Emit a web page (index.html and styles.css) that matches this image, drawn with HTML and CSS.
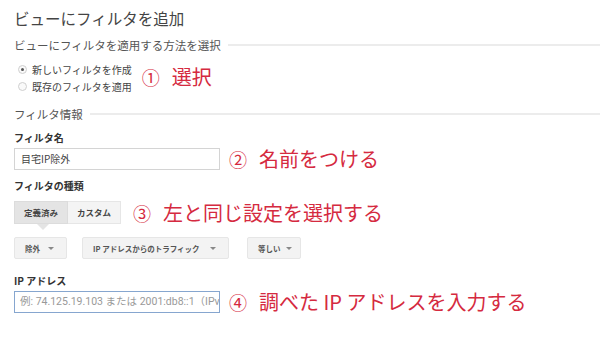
FILE: index.html
```html
<!DOCTYPE html>
<html lang="ja">
<head>
  <meta charset="UTF-8">
  <title>ビューにフィルタを追加</title>
  <link rel="stylesheet" href="styles.css">
</head>
<body>
  <h1 class="page-title">ビューにフィルタを追加</h1>

  <div class="section-head">
    <span>ビューにフィルタを適用する方法を選択</span>
  </div>

  <div class="row">
    <div class="radios">
      <label class="radio"><span class="dot checked"></span>新しいフィルタを作成</label>
      <label class="radio"><span class="dot"></span>既存のフィルタを適用</label>
    </div>
    <div class="note note-1"><span class="num">①</span>選択</div>
  </div>

  <div class="section-head info-head">
    <span>フィルタ情報</span>
  </div>

  <div class="field-label">フィルタ名</div>
  <div class="row">
    <div class="text-input">目宅IP除外</div>
    <div class="note"><span class="num">②</span>名前をつける</div>
  </div>

  <div class="field-label type-label">フィルタの種類</div>
  <div class="row tabs-row">
    <div class="tabs">
      <div class="tab active">定義済み</div>
      <div class="tab">カスタム</div>
    </div>
    <div class="note note-3"><span class="num">③</span>左と同じ設定を選択する</div>
  </div>

  <div class="selects">
    <div class="select sel-exclude">除外<span class="caret"></span></div>
    <div class="select sel-traffic">IP アドレスからのトラフィック<span class="caret"></span></div>
    <div class="select sel-equal">等しい<span class="caret"></span></div>
  </div>

  <div class="field-label ip-label">IP アドレス</div>
  <div class="row">
    <div class="text-input focus">例: 74.125.19.103 または 2001:db8::1（IPv6 の場合）</div>
    <div class="note"><span class="num">④</span>調べた IP アドレスを入力する</div>
  </div>
</body>
</html>
```

FILE: styles.css
```css
body {
  margin: 0;
  padding: 8px 0 0 14px;
  background: #fff;
  color: #333;
  font-family: "Noto Sans CJK JP", "Noto Sans", sans-serif;
  font-size: 10px;
}

.page-title {
  margin: 0;
  font-size: 15.5px;
  font-weight: 400;
  color: #444;
  line-height: 20px;
}

.section-head {
  display: flex;
  align-items: center;
  gap: 7px;
  margin-top: 9px;
  font-size: 11.5px;
  color: #555;
  line-height: 16px;
}

.section-head::after {
  content: "";
  flex: 1;
  border-top: 2px solid #ececec;
}

.info-head {
  margin-top: 12px;
}

.row {
  display: flex;
  align-items: center;
}

.radios {
  display: flex;
  flex-direction: column;
  gap: 2px;
  margin-top: 9px;
  padding-left: 4px;
}

.radio {
  display: flex;
  align-items: center;
  gap: 5px;
  font-size: 10px;
  color: #444;
  line-height: 15px;
}

.dot {
  width: 7px;
  height: 7px;
  border: 1px solid #cfcfcf;
  border-radius: 50%;
  background: #fafafa;
  position: relative;
}

.dot.checked::after {
  content: "";
  position: absolute;
  left: 2px;
  top: 2px;
  width: 3px;
  height: 3px;
  border-radius: 50%;
  background: #555;
}

.note {
  display: flex;
  align-items: center;
  margin-left: 9px;
  font-size: 20px;
  color: #d52a40;
  line-height: 22px;
  white-space: nowrap;
}

.num {
  font-size: 18px;
  margin-right: 12px;
}

.note-1 {
  margin-top: 6px;
  margin-left: 10px;
}

.field-label {
  margin-top: 9px;
  font-weight: 700;
  font-size: 10px;
  color: #333;
  line-height: 14px;
}

.text-input {
  box-sizing: border-box;
  width: 206px;
  height: 22px;
  margin-top: 3px;
  padding: 0 6px;
  border: 1px solid #d4d4d4;
  font-size: 10px;
  line-height: 20px;
  color: #444;
  white-space: nowrap;
  overflow: hidden;
}

.text-input + .note {
  margin-top: 3px;
}

.text-input.focus {
  margin-top: 2px;
  border-color: #86a6cf;
  color: #999;
  font-family: Roboto, "Noto Sans CJK JP", sans-serif;
  font-size: 10.5px;
  padding: 0 5px;
}

.type-label {
  margin-top: 9px;
}

.tabs-row {
  align-items: flex-start;
}

.tabs {
  display: flex;
  margin-top: 8px;
}

.tab {
  padding: 0 9px;
  height: 21px;
  line-height: 21px;
  font-size: 8.5px;
  font-weight: 700;
  color: #444;
  background: #f4f4f4;
  border: 1px solid #e6e6e6;
}

.tab + .tab {
  border-left: none;
}

.tab.active {
  position: relative;
  background: #e4e4e4;
  border-color: #dcdcdc;
}

.tab.active::after {
  content: "";
  position: absolute;
  left: 22px;
  bottom: -7px;
  border-left: 6px solid transparent;
  border-right: 6px solid transparent;
  border-top: 6px solid #e4e4e4;
}

.note-3 {
  margin-top: 9px;
  margin-left: 12px;
}

.selects {
  display: flex;
  margin-top: 13px;
}

.select {
  box-sizing: border-box;
  display: flex;
  align-items: center;
  justify-content: space-between;
  height: 22px;
  padding: 0 10px 0 10px;
  font-size: 7.5px;
  font-weight: 700;
  color: #555;
  background: #f3f3f3;
  border: 1px solid #e6e6e6;
  border-radius: 2px;
  white-space: nowrap;
}

.caret {
  width: 0;
  height: 0;
  border-left: 3px solid transparent;
  border-right: 3px solid transparent;
  border-top: 3px solid #888;
}

.sel-exclude {
  width: 53px;
  padding-right: 12px;
}

.sel-traffic {
  margin-left: 15px;
  width: 147px;
  padding-right: 12px;
}

.sel-equal {
  margin-left: 18px;
  width: 54px;
  padding-right: 8px;
}

.ip-label {
  margin-top: 15px;
}
```
